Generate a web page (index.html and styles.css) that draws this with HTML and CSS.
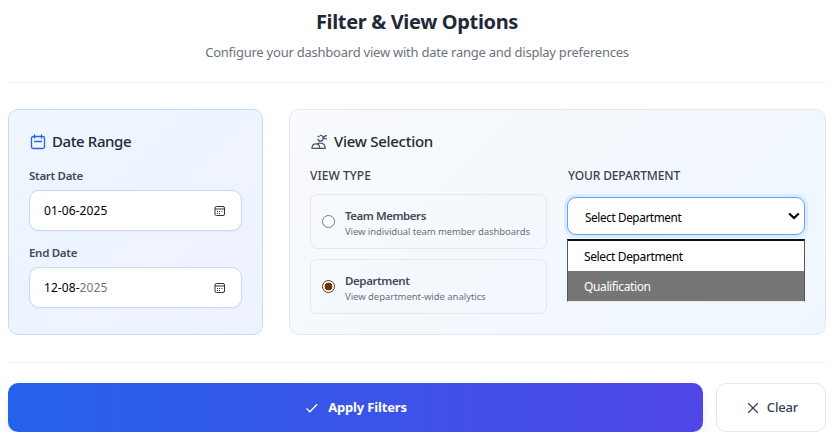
FILE: index.html
```html
<!DOCTYPE html>
<html lang="en">
<head>
<meta charset="utf-8">
<title>Filter &amp; View Options</title>
<link rel="stylesheet" href="styles.css">
</head>
<body>
<main class="page">
  <header class="header">
    <h1 class="title"><span>Filter &amp; View Options</span></h1>
    <p class="subtitle"><span>Configure your dashboard view with date range and display preferences</span></p>
  </header>
  <div class="panels">
    <section class="panel panel-date">
      <h2 class="heading">
        <svg class="icon-cal" width="16" height="16" viewBox="0 0 16 16" fill="none" stroke="currentColor" stroke-width="1.3" stroke-linecap="round"><rect x="1.500" y="2.500" width="13" height="12" rx="1.800"/><path d="M4.500 1v3M11.500 1v3M4.500 7.500h7"/></svg>
        <span>Date Range</span>
      </h2>
      <div class="label">Start Date</div>
      <div class="date"><span class="date-text">01-06-2025</span>
        <svg width="12" height="12" viewBox="0 0 12 12" fill="none" stroke="#333"><rect x="1" y="1.500" width="9.500" height="9" rx="1.500"/><path d="M1 4h9.500" /><path d="M3 6.500h1M5 6.500h1M7.500 6.500h1M3 8.500h1M5 8.500h1"/></svg>
      </div>
      <div class="label">End Date</div>
      <div class="date"><span class="date-text">12-08-<span class="muted">2025</span></span>
        <svg width="12" height="12" viewBox="0 0 12 12" fill="none" stroke="#333"><rect x="1" y="1.500" width="9.500" height="9" rx="1.500"/><path d="M1 4h9.500" /><path d="M3 6.500h1M5 6.500h1M7.500 6.500h1M3 8.500h1M5 8.500h1"/></svg>
      </div>
    </section>
    <section class="panel panel-view">
      <h2 class="heading heading-view">
        <svg class="icon-people" width="18" height="16" viewBox="0 0 18 16" fill="none" stroke="currentColor" stroke-width="1.250"><path d="M2 14.300c0-3 1.500-4.500 4-4.500s3.700 1.500 3.700 4.500zM7 9.900c1-.7 2-.9 3.100-.7 3 0 5 2 5 5.100H9.500M7.500 2.400h2.200M8 4.800c.2 1.500 1.100 2.300 2.500 2.300 1.700 0 2.500-1.100 2.700-2.700M10 1.500c1.400-.4 2.300.2 3 1.300l1.400 1.400c.7.600 1.500.7 2.600.6M12.700 4.300l1.900-2c.5-.5 1.200-.6 2.400-.6"/></svg>
        <span>View Selection</span>
      </h2>
      <div class="columns">
        <div class="column">
          <div class="label caps">VIEW TYPE</div>
          <label class="choice"><span class="radio"></span><span class="choice-body"><span class="choice-name">Team Members</span><span class="choice-note">View individual team member dashboards</span></span></label>
          <label class="choice"><span class="radio checked"></span><span class="choice-body"><span class="choice-name name-dep">Department</span><span class="choice-note note-dep">View department-wide analytics</span></span></label>
        </div>
        <div class="column">
          <div class="label caps your">YOUR DEPARTMENT</div>
          <div class="select"><span class="value">Select Department</span>
            <svg width="12" height="8" viewBox="0 0 12 8" fill="none" stroke="#000" stroke-width="2.200"><path d="M1.200 1.500 6 6l4.800-4.500"/></svg>
            <div class="menu"><div class="option">Select Department</div><div class="option active">Qualification</div></div>
          </div>
        </div>
      </div>
    </section>
  </div>
  <footer class="actions">
    <button class="btn apply"><svg width="14" height="12" viewBox="0 0 14 12" fill="none" stroke="currentColor" stroke-width="1.300"><path d="m1.500 6.500 3.400 3.300 7.300-7.600"/></svg><span>Apply Filters</span></button>
    <button class="btn clear"><svg width="12" height="12" viewBox="0 0 12 12" fill="none" stroke="currentColor" stroke-width="1.300"><path d="m1.200 1.200 9.600 9.600M10.800 1.200l-9.600 9.600"/></svg><span>Clear</span></button>
  </footer>
</main>
</body>
</html>
```
FILE: styles.css
```css
* { box-sizing: border-box; }
body { margin: 0; background: #fff; font-family: "Noto Sans", "Open Sans", sans-serif; color: #1f2937; overflow: hidden; }
h1, h2, p { margin: 0; }
svg { flex: none; display: block; }
.page { width: 818px; margin-left: 8px; }
.header { height: 83px; padding-top: 8px; border-bottom: 1px solid #f3f4f6; text-align: center; }
.title { font-size: 20px; line-height: 28px; font-weight: 700; letter-spacing: -0.35px; }
.subtitle { margin-top: 6px; font-size: 13px; line-height: 20px; letter-spacing: -0.235px; color: #6b7280; }
.panels { display: flex; gap: 26px; margin-top: 26px; }
.panel { height: 226px; border: 1px solid #bfdbfe; border-radius: 10px; padding: 20px; }
.panel-date { width: 255px; background: linear-gradient(135deg, #eff6ff, #eef2ff); }
.panel-view { width: 537px; border-color: #e2e8f0; background: linear-gradient(135deg, #f8fafc, #eff6ff); }
.heading { display: flex; align-items: center; height: 24px; font-size: 15px; font-weight: 500; letter-spacing: -0.4px; gap: 6px; white-space: nowrap; }
.heading span { margin-top: -2px; }
.icon-cal { color: #2563eb; margin-left: 1px; }
.heading-view { gap: 6px; letter-spacing: -0.28px; }
.icon-people { color: #475569; }
.label { height: 20px; line-height: 22px; font-size: 11.5px; font-weight: 600; letter-spacing: -0.3px; color: #414b5a; white-space: nowrap; }
.label.caps { font-size: 12px; font-weight: 500; letter-spacing: 0.05px; color: #374151; }
.label.your { padding-left: 1px; letter-spacing: -0.12px; }
.panel-date .heading { margin-bottom: 11px; }
.date { display: flex; align-items: center; justify-content: space-between; width: 213px; height: 41px; margin: 5px 0 11px; padding: 0 15px 0 14px; border: 1px solid #bfdbfe; border-radius: 10px; background: #fff; font-size: 12px; letter-spacing: 0.07px; color: #000; box-shadow: 0 1px 2px rgba(0,0,0,.04); }
.muted { color: #757575; }
.columns { display: grid; grid-template-columns: 237px 238px; gap: 20px; margin-top: 11px; }
.choice { display: flex; align-items: center; height: 55px; margin-top: 10px; padding-left: 11px; border: 1px solid #e5e7eb; border-radius: 7px; }
.caps + .choice { margin-top: 9px; }
.radio { flex: none; width: 13px; height: 13px; border: 1px solid #767676; border-radius: 50%; background: #fff; }
.radio.checked { border-color: #6b3410; background: radial-gradient(circle, #6b3410 0 3.600px, #fff 4.200px); }
.choice-body { margin: 3px 0 0 10px; display: flex; flex-direction: column; white-space: nowrap; }
.choice-name { font-size: 11.5px; line-height: 17px; font-weight: 600; letter-spacing: -0.45px; color: #414b5a; }
.name-dep { letter-spacing: -0.4px; }
.choice-note { font-size: 9.500px; line-height: 15px; letter-spacing: -0.08px; color: #6b7280; }
.note-dep { letter-spacing: -0.04px; }
.select { position: relative; display: flex; align-items: center; justify-content: space-between; height: 38px; margin-top: 12px; padding: 0 4px 0 17px; border: 1px solid #60a5fa; border-radius: 9px; background: #fff; box-shadow: 0 0 0 3px #dbeafe; font-size: 12px; letter-spacing: -0.38px; color: #000; }
.value { font-size: 11.7px; letter-spacing: -0.36px; padding-top: 1px; }
.menu { position: absolute; left: -1px; top: 41px; width: 238px; height: 63px; border: 1px solid #555; border-top: 2px solid #111; border-bottom-color: #eee; background: #fff; }
.option { height: 30px; line-height: 32px; padding-left: 16px; }
.option.active { background: #767676; color: #fff; }
.actions { display: flex; gap: 13px; margin-top: 27px; padding-top: 20px; border-top: 1px solid #f3f4f6; }
.btn { display: flex; align-items: center; justify-content: center; height: 49px; border: 0; border-radius: 10px; font: 500 13px "Noto Sans", "Open Sans", sans-serif; }
.apply { width: 695px; gap: 9px; padding-left: 7px; color: #fff; font-weight: 700; letter-spacing: -0.16px; background: linear-gradient(90deg, #2563eb, #4f46e5); box-shadow: 0 10px 15px -3px rgba(0,0,0,.1), 0 4px 6px -4px rgba(0,0,0,.1); }
.btn span { margin-top: -1px; }
.clear { width: 110px; gap: 8px; padding-left: 9px; letter-spacing: -0.15px; border: 1px solid #e5e7eb; background: #fff; color: #374151; }
```
